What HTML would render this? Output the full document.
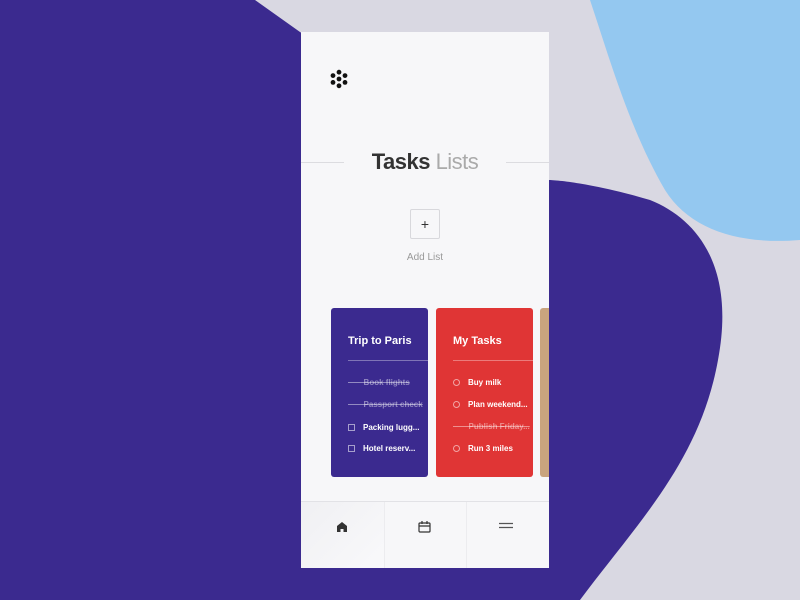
<!DOCTYPE html>
<html><head><style>
body{margin:0;width:800px;height:600px;overflow:hidden;background:#3b2a8f;font-family:"Liberation Sans",sans-serif;position:relative}
svg.bg{position:absolute;left:0;top:0}
.phone{position:absolute;left:301px;top:32px;width:248px;height:536px;background:#f7f7f9;overflow:hidden}
.line{position:absolute;top:130px;height:1px;background:#dcdce0}
.title{position:absolute;top:117px;left:0;width:248px;text-align:center;font-size:22px;letter-spacing:-0.5px}
.add{position:absolute;left:109px;top:177px;width:28px;height:28px;border:1px solid #d8d8dc;border-radius:2px;background:#f7f7f9;text-align:center;line-height:28px;font-size:14px;color:#333}
.addt{position:absolute;top:220px;left:0;width:248px;text-align:center;font-size:10px;color:#999}
.card{position:absolute;top:276px;width:97px;height:169px;border-radius:3px;color:#fff}
.card h3{margin:0;position:absolute;left:17px;top:27px;font-size:11px;font-weight:bold}
.card .hr{position:absolute;left:17px;right:0;top:52px;height:1px;background:rgba(255,255,255,.35)}
.it{position:absolute;left:17px;font-size:8px;font-weight:bold;white-space:nowrap}
.it.d{text-decoration:line-through;color:rgba(255,255,255,.45)}
.it .b{display:inline-block;width:5px;height:5px;border:1px solid rgba(255,255,255,.55);margin-right:8px;vertical-align:-1px}
.it .c{border-radius:50%}
.nav{position:absolute;top:469px;left:0;width:248px;height:67px;border-top:1px solid #e2e2e6}
.nav div{position:absolute;top:0;height:67px;border-right:1px solid #ececef}
</style></head><body>
<svg class="bg" width="800" height="600">
<path d="M255 0 L800 0 L800 600 L580 600 C640 520 700 460 718 360 C735 270 700 220 650 200 C600 185 560 180 548 180 L300 32 Z" fill="#d9d8e2"/>
<path d="M590 0 L800 0 L800 240 C740 245 690 230 665 190 C630 130 610 60 590 0 Z" fill="#94c8f0"/>
</svg>
<div class="phone">
<svg style="position:absolute;left:28px;top:37px" width="20" height="20"><g fill="#111"><circle cx="10" cy="3.2" r="2.4"/><circle cx="10" cy="10" r="2.4"/><circle cx="10" cy="16.8" r="2.4"/><circle cx="4" cy="6.6" r="2.4"/><circle cx="16" cy="6.6" r="2.4"/><circle cx="4" cy="13.4" r="2.4"/><circle cx="16" cy="13.4" r="2.4"/></g></svg>
<div class="line" style="left:0;width:43px"></div>
<div class="line" style="left:205px;width:43px"></div>
<div class="title"><b style="color:#333">Tasks</b> <span style="color:#aaa">Lists</span></div>
<div class="add">+</div>
<div class="addt">Add List</div>
<div class="card" style="left:30px;background:#3b2a8f">
<h3>Trip to Paris</h3><div class="hr"></div>
<div class="it d" style="top:70px">&nbsp;&nbsp;&nbsp;&nbsp;&nbsp;&nbsp;&nbsp;Book flights</div>
<div class="it d" style="top:92px">&nbsp;&nbsp;&nbsp;&nbsp;&nbsp;&nbsp;&nbsp;Passport check</div>
<div class="it" style="top:115px"><span class="b"></span>Packing lugg...</div>
<div class="it" style="top:136px"><span class="b"></span>Hotel reserv...</div>
</div>
<div class="card" style="left:135px;background:#e03535">
<h3>My Tasks</h3><div class="hr"></div>
<div class="it" style="top:70px"><span class="b c"></span>Buy milk</div>
<div class="it" style="top:92px"><span class="b c"></span>Plan weekend...</div>
<div class="it d" style="top:114px">&nbsp;&nbsp;&nbsp;&nbsp;&nbsp;&nbsp;&nbsp;Publish Friday...</div>
<div class="it" style="top:136px"><span class="b c"></span>Run 3 miles</div>
</div>
<div class="card" style="left:239px;background:#c9a47e"></div>
<div class="nav">
<div style="left:0;width:83px;background:linear-gradient(135deg,#f0f0f3,#f9f9fb)"></div>
<div style="left:84px;width:81px"></div>
<svg style="position:absolute;left:35px;top:19px" width="12" height="12"><path d="M1 5 L6 1 L11 5 V11 H7.5 V8 H4.5 V11 H1 Z" fill="#333"/></svg>
<svg style="position:absolute;left:117px;top:18px" width="13" height="13"><rect x="1" y="3" width="11" height="9" rx="1" fill="none" stroke="#333" stroke-width="1.2"/><path d="M1 6 H12 M4 1 V4 M9 1 V4" stroke="#333" stroke-width="1.2"/></svg>
<svg style="position:absolute;left:198px;top:20px" width="14" height="8"><path d="M0 1.5 H14 M0 5.5 H14" stroke="#555" stroke-width="1.3"/></svg>
</div>
</div>
</body></html>
